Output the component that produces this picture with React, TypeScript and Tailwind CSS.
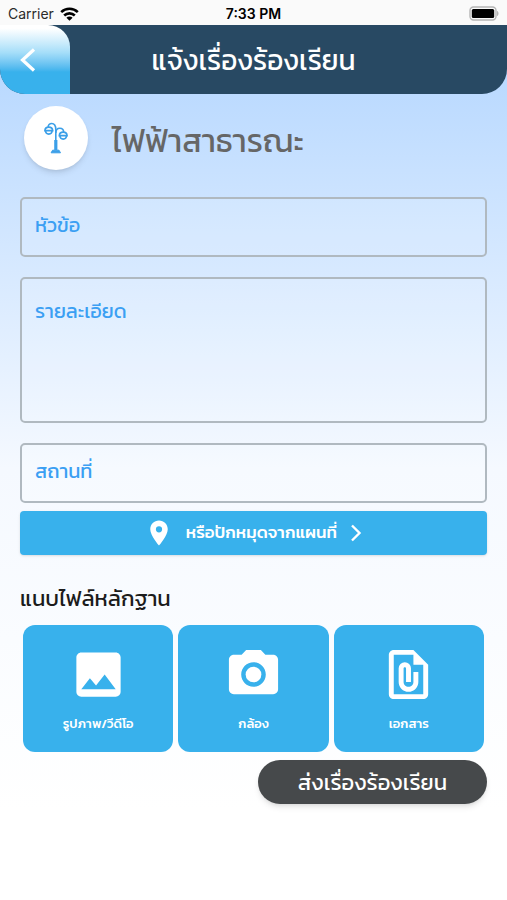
import type { ReactNode } from 'react'
import { MdCameraAlt, MdImage, MdLocationOn, MdOutlineFilePresent } from 'react-icons/md'

interface AttachButtonProps {
  icon: ReactNode
  label: string
}

function StatusBar() {
  return (
    <div className="grid h-[25px] grid-cols-3 items-center bg-[#fafafa] px-2 pt-0.5 font-['Inter',sans-serif] text-sm leading-5 text-black">
      <div className="flex items-center gap-1.5">
        <span className="text-[#2b2b2b]">Carrier</span>
        <svg width="19" height="14" viewBox="0 0 19 14" fill="none" stroke="black" strokeWidth="2.6">
          <path d="M1.2 5.1a12 12 0 0 1 16.6 0" />
          <path d="M4.2 8.5a7.6 7.6 0 0 1 10.6 0" />
          <path d="M9.5 13.8 6.4 10.7a4.4 4.4 0 0 1 6.2 0z" fill="black" stroke="none" />
        </svg>
      </div>
      <span className="text-center font-semibold whitespace-nowrap">7:33 PM</span>
      <svg className="justify-self-end" width="30" height="15" viewBox="0 0 30 15">
        <rect x="1" y="1" width="26" height="13" rx="3.5" fill="#fafafa" stroke="#b5b5b5" strokeWidth="1.4" />
        <rect x="2.8" y="3" width="22.4" height="9" rx="1.5" fill="black" />
        <path d="M28 5c2 .6 2 4.4 0 5z" fill="#b5b5b5" />
      </svg>
    </div>
  )
}

function LampIcon() {
  return (
    <svg width="24" height="32" viewBox="0 0 24 32" fill="none" stroke="#3b9fe8" strokeWidth="1.6">
      <path d="M11.8 20V7.5c0-3.8-1.600-6-4-6S4.200 3 4.200 5" />
      <path d="M11.8 11c0-3 1.700-4.800 4-4.800s3.800 1.600 3.800 3.800" />
      <path d="M.9 8.600c.3-4.600 7.400-4.600 7.800 0z" />
      <path d="M1.500 8.800c.2 4.400 6.400 4.400 6.600 0" />
      <path d="M15.300 13.600c.3-4.600 7.400-4.600 7.800 0z" />
      <path d="M15.900 13.800c.2 4.400 6.400 4.400 6.600 0" />
      <path d="M11.800 18v10" strokeWidth="3.2" />
      <path d="M8.600 28.200h6.400l1.500 2.600H7.100z" fill="#3b9fe8" strokeWidth="1" />
    </svg>
  )
}

function AttachButton({ icon, label }: AttachButtonProps) {
  return (
    <button
      type="button"
      className="flex flex-1 flex-col items-center gap-3 rounded-xl bg-[#38b1ec] py-5 text-white"
    >
      {icon}
      <span className="text-[13px] leading-4 font-medium">{label}</span>
    </button>
  )
}

const fieldClass =
  'block w-full resize-none rounded-[5px] border-2 border-[#b0b9c0] bg-white/10 px-[13px] text-xl leading-7 text-gray-700 outline-none placeholder:text-[#3b9ff3] placeholder:opacity-100'

export default function App() {
  return (
    <div className="min-h-screen bg-linear-to-b from-[#b9d9ff] from-8% via-[#f5f9ff] via-52% to-white to-90% font-['Kanit','Prompt',sans-serif]">
      <StatusBar />

      <header className="flex h-[69px] overflow-hidden rounded-b-[25px] bg-[#284963]">
        <button
          type="button"
          aria-label="ย้อนกลับ"
          className="flex w-[70px] items-center rounded-tr-[22px] bg-linear-to-b from-white from-5% via-[#a5def9] via-40% to-[#38b1ec] to-68% pl-5"
        >
          <svg width="16" height="24" viewBox="0 0 16 24" fill="none" stroke="white" strokeWidth="3.2">
            <path d="M14 1.5 2.5 12 14 22.5" />
          </svg>
        </button>
        <h1 className="flex flex-1 items-center justify-center pr-[70px] text-[28px] text-white">
          แจ้งเรื่องร้องเรียน
        </h1>
      </header>

      <main className="px-5 pt-3">
        <div className="flex items-center gap-6 pl-1">
          <div className="flex size-16 items-center justify-center rounded-full bg-white shadow-md">
            <LampIcon />
          </div>
          <h2 className="pt-1.5 text-[32px] leading-10 text-[#666]">ไฟฟ้าสาธารณะ</h2>
        </div>

        <form className="pt-[27px]" onSubmit={(e) => e.preventDefault()}>
          <div className="flex flex-col gap-5">
            <input aria-label="หัวข้อ" placeholder="หัวข้อ" className={`${fieldClass} pt-3 pb-4`} />
            <textarea aria-label="รายละเอียด" placeholder="รายละเอียด" rows={4} className={`${fieldClass} pt-[18px] pb-3`} />
            <input aria-label="สถานที่" placeholder="สถานที่" className={`${fieldClass} pt-3 pb-4`} />
          </div>

          <button
            type="button"
            className="mt-2 flex h-11 w-full items-center justify-center gap-3 rounded bg-[#38b1ec] text-[17px] font-medium text-white shadow"
          >
            <MdLocationOn size={30} />
            <span>หรือปักหมุดจากแผนที่</span>
            <svg width="14" height="18" viewBox="0 0 14 18" fill="none" stroke="white" strokeWidth="2.4">
              <path d="m3 1.5 7.5 7.5L3 16.5" />
            </svg>
          </button>

          <h3 className="pt-7 text-[22px] leading-8 text-[#1c1c1c]">แนบไฟล์หลักฐาน</h3>
          <div className="flex gap-[5px] px-[3px] pt-2.5">
            <AttachButton icon={<MdImage size={59} />} label="รูปภาพ/วีดีโอ" />
            <AttachButton icon={<MdCameraAlt size={59} />} label="กล้อง" />
            <AttachButton icon={<MdOutlineFilePresent size={59} />} label="เอกสาร" />
          </div>

          <div className="flex justify-end pt-2">
            <button
              type="submit"
              className="h-11 rounded-full bg-[#46494b] px-10 text-[22px] text-white shadow-md"
            >
              ส่งเรื่องร้องเรียน
            </button>
          </div>
        </form>
      </main>
    </div>
  )
}
